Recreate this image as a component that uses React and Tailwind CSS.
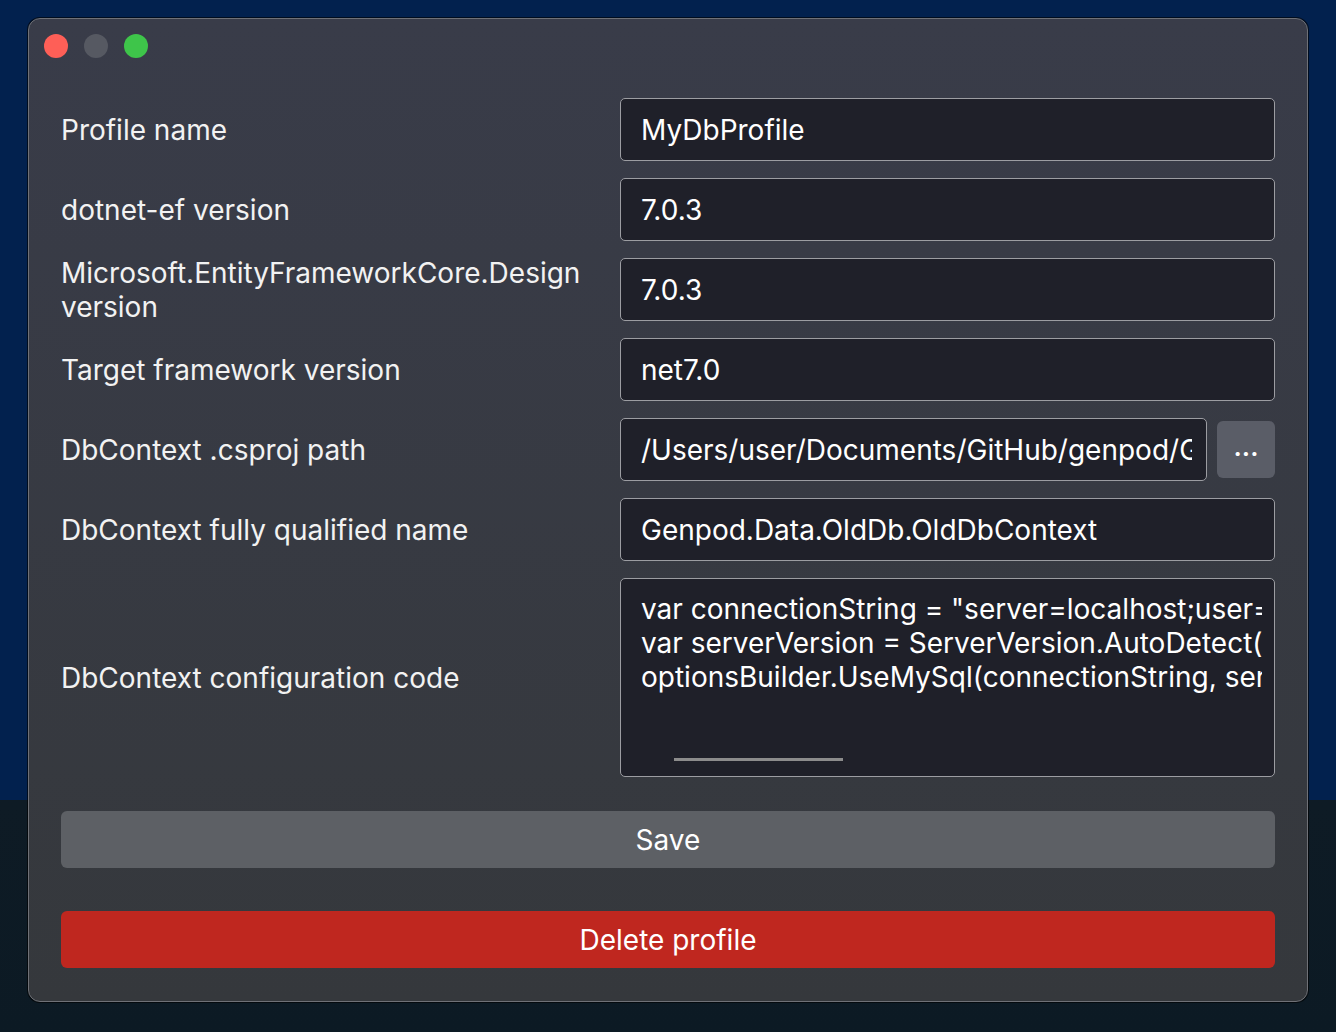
import React from "react";

const font = { fontFamily: "Inter, 'Noto Sans', sans-serif" };

function Field({ children, className = "" }) {
  return (
    <div
      className={
        "h-[63px] rounded-[5px] border-[1.5px] border-[#9c9da2] bg-[#1f2029] pl-[20px] pr-[12px] flex items-center text-[28px] text-white " +
        className
      }
    >
      <span className="block overflow-hidden whitespace-nowrap min-w-0">{children}</span>
    </div>
  );
}

function Label({ children }) {
  return (
    <div className="flex items-center text-[28px] leading-[34px] text-[#f2f2f2] pr-[20px] whitespace-nowrap">
      {children}
    </div>
  );
}

export default function App() {
  return (
    <div
      className="relative w-[1336px] h-[1032px] overflow-hidden bg-[#02214e]"
      style={font}
    >
      <div className="absolute left-0 right-0 top-[800px] bottom-0 bg-gradient-to-b from-[#0e1b25] to-[#0c1a24]" />
      <div className="absolute left-[27px] top-[17px] w-[1282px] h-[986px] rounded-[13px] bg-black/60" />
      <div className="absolute left-[28px] top-[18px] w-[1280px] h-[984px] rounded-[12px] border border-[#6f7177] bg-gradient-to-b from-[#393c49] to-[#35383c] flex flex-col">
        <div className="flex gap-[16px] pl-[15px] pt-[15px] h-[79px]">
          <div className="w-[24px] h-[24px] rounded-full bg-[#fe5f57]" />
          <div className="w-[24px] h-[24px] rounded-full bg-[#565962]" />
          <div className="w-[24px] h-[24px] rounded-full bg-[#3ec54a]" />
        </div>
        <div className="px-[32px] flex flex-col">
          <div className="grid grid-cols-[1fr_655px] grid-rows-[63px_63px_63px_63px_63px_63px_199px] gap-y-[17px]">
            <Label>Profile name</Label>
            <Field>MyDbProfile</Field>
            <Label>dotnet-ef version</Label>
            <Field>7.0.3</Field>
            <Label>
              <span>
                Microsoft.EntityFrameworkCore.Design
                <br />
                version
              </span>
            </Label>
            <Field>7.0.3</Field>
            <Label>Target framework version</Label>
            <Field>net7.0</Field>
            <Label>DbContext .csproj path</Label>
            <div className="flex items-center gap-[10px] min-w-0">
              <Field className="flex-1 min-w-0 pr-[14px]">/Users/user/Documents/GitHub/genpod/Genpod.Data/Genpod.Data.csproj</Field>
              <button className="w-[58px] h-[57px] shrink-0 rounded-[6px] bg-[#5a5d67] text-white text-[26px] font-semibold leading-none pb-[6px]">
                ...
              </button>
            </div>
            <Label>DbContext fully qualified name</Label>
            <Field>Genpod.Data.OldDb.OldDbContext</Field>
            <Label>DbContext configuration code</Label>
            <div className="relative h-[199px] rounded-[5px] border-[1.5px] border-[#9c9da2] bg-[#1f2029] overflow-hidden">
              <div className="absolute left-[20px] right-[12px] top-[13px] overflow-hidden whitespace-nowrap text-[28px] leading-[34px] text-white">
                <div>var connectionString = "server=localhost;user=root;password=1234;database=genpod";</div>
                <div>var serverVersion = ServerVersion.AutoDetect(connectionString);</div>
                <div>optionsBuilder.UseMySql(connectionString, serverVersion);</div>
              </div>
              <div className="absolute left-[53px] top-[179px] w-[169px] h-[3px] bg-[#8c8c8c]" />
            </div>
          </div>
          <button className="mt-[34px] h-[57px] rounded-[6px] bg-[#5d6065] text-white text-[28px]">
            Save
          </button>
          <button className="mt-[43px] h-[57px] rounded-[6px] bg-[#bf271f] text-white text-[28px]">
            Delete profile
          </button>
        </div>
      </div>
    </div>
  );
}
